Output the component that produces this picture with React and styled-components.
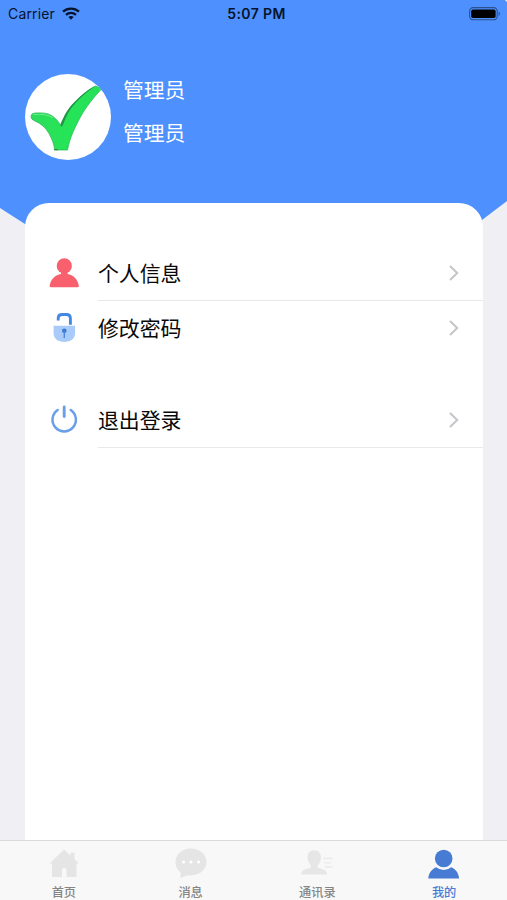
import React from 'react'
import styled, { createGlobalStyle } from 'styled-components';

const GlobalStyle = createGlobalStyle`
    * {
        box-sizing: border-box;
    }
    body {
        margin: 0;
        background: #efeff4;
        font-family: Inter, "Noto Sans CJK SC", sans-serif;
    }
`;

const WifiIcon = () => (
    <svg width="18" height="13" viewBox="0 0 18 13" fill="none" stroke="#07132b" strokeWidth="2.3">
        <path d="M1 4.7C5.5.5 12.5.5 17 4.7" />
        <path d="M4 7.9C6.8 5.3 11.2 5.3 14 7.9" />
        <path d="M6.4 10.1C7.9 8.7 10.1 8.7 11.6 10.1L9 12.8Z" fill="#07132b" stroke="none" />
    </svg>
);

const BatteryIcon = () => (
    <svg width="32" height="14" viewBox="0 0 32 14">
        <rect x=".6" y=".6" width="27.6" height="12.2" rx="3.6" fill="none" stroke="#2b518e" strokeWidth="1.1" />
        <rect x="2.2" y="2.4" width="24.4" height="8.6" rx="1.8" fill="#000" />
        <path d="M29.6 4.8c1.8.7 1.8 3.500 0 4.200z" fill="#2b518e" />
    </svg>
);

const CheckIcon = () => (
    <svg width="86" height="86" viewBox="0 0 86 86">
        <defs>
            <linearGradient id="tick" x1="0" y1="0" x2="1" y2="0">
                <stop offset="0" stopColor="#2fdc5b" />
                <stop offset=".5" stopColor="#25e557" />
                <stop offset="1" stopColor="#27df5a" />
            </linearGradient>
        </defs>
        <path
            d="M6 42.500C6 40 8 39 11 39C19 38.500 24 39.500 28 42.500C32 45.500 34 49 36.500 52C40 42 44 34 50 28.500C56 22 63 15.500 70.500 12L77 14.500C69 23 61 33 56 42C50 53 45 63 42.500 76H29.500C29.500 71 27 65 24 59.500C20.500 53.500 16 49.500 10 47C7.500 46 6 44.500 6 42.500Z"
            fill="url(#tick)" stroke="#23b652" strokeWidth=".7"
        />
        <path d="M35.200 51C39 41 44 33 50 27.500C56 21.500 63 15.500 70.500 12C58 20.500 50 29 45 36C41 42 39 49 37 53Z" fill="#1e9747" />
        <path d="M8.500 40.500C17 40 23 40.500 28 44" fill="none" stroke="#72ed8d" />
        <path d="M29 75.700h4" stroke="#337b45" />
    </svg>
);

const PersonIcon = () => (
    <svg width="30" height="30" viewBox="0 0 30 30" fill="#f9606d">
        <circle cx="15.300" cy="7.900" r="7.600" />
        <path d="M.6 28C1.700 20.500 6.500 17.200 12 16L12.300 14h6l.3 2C24 17.200 28.800 20.500 29.900 28Q29.900 29.200 28.500 29.200H2Q.6 29.200.6 28Z" />
    </svg>
);

const LockIcon = () => (
    <svg width="30" height="32" viewBox="0 0 30 32" fill="none">
        <path d="M9.200 8.500V6.500Q9.200 2.500 13.200 2.500H17.400Q21.400 2.500 21.400 6.500V12.800" stroke="#4389e3" strokeWidth="2.900" />
        <path d="M4.600 13.700H26V21.300C26 26.800 21.300 30 15.300 30S4.600 26.800 4.600 21.300Z" fill="#a9cbfa" />
        <circle cx="15.300" cy="18.700" r="2.300" fill="#3979d0" />
        <path d="M15.300 19V26" stroke="#4a88dc" strokeWidth="1.400" />
    </svg>
);

const PowerIcon = () => (
    <svg width="28" height="30" viewBox="0 0 28 30" fill="none" stroke="#699fe8" strokeWidth="2.500" strokeLinecap="round">
        <path d="M7.700 5A11.700 11.700 0 1 0 20.700 5" />
        <path d="M14.200 2V11.500" strokeWidth="2.900" />
    </svg>
);

const Chevron = () => (
    <svg width="12" height="18" viewBox="0 0 12 18" fill="none" stroke="#c5c5ca" strokeWidth="2">
        <path d="M2 2L9.200 9L2 16" />
    </svg>
);

const HomeIcon = () => (
    <svg width="32" height="32" viewBox="0 0 32 32" fill="#e5e5e5">
        <path d="M16 1.500L22.500 7.500V4.500H26.500V11.200L31 15.500H28.500V29H18.500V21Q16.200 19 14 21V29H4V15.500H1.500Z" />
    </svg>
);

const ChatIcon = () => (
    <svg width="32" height="32" viewBox="0 0 32 32" fill="#e5e5e5">
        <path d="M16 .6C7.300.6.500 6.500.500 14C.500 18.500 2.500 22 5.700 24.500L5.500 30L12.500 27.200C23.500 28.500 31.500 22.500 31.500 14C31.500 6.500 24.500.6 16 .6Z" />
        <g fill="#fff">
            <circle cx="8.500" cy="14" r="1.600" />
            <circle cx="16" cy="14" r="1.600" />
            <circle cx="23.500" cy="14" r="1.600" />
        </g>
    </svg>
);

const ContactsIcon = () => (
    <svg width="34" height="32" viewBox="0 0 34 32" fill="#e6e6e6">
        <path d="M14 2.200C9.500 2.200 7.300 5.500 7.600 10C7.800 13.500 9.500 15.500 11 17.500V19.500C5 21.500 1.200 22 1.200 26.500H27.200C27 22 23 21.500 17.500 19.500V17.500C19.500 15.500 20.800 13.500 21 10C21.200 5.500 18.500 2.200 14 2.200Z" />
        <path d="M23 9.500H32.500V11.300H23ZM24 14H31V15.500H24ZM25 18H32.500V19.800H25Z" fill="#ececec" />
    </svg>
);

const MineIcon = () => (
    <svg width="32" height="32" viewBox="0 0 32 32" fill="#487cd4">
        <circle cx="15.700" cy="10.500" r="8.800" />
        <path d="M.3 30.500C.7 25 3.700 21 8.200 19.200Q15.700 25 23.200 19.200C27.700 21 30.700 25 31.100 30.500Z" />
    </svg>
);

const tabs = [
    { name: '首页', icon: <HomeIcon /> },
    { name: '消息', icon: <ChatIcon /> },
    { name: '通讯录', icon: <ContactsIcon /> },
    { name: '我的', icon: <MineIcon />, active: true },
];

const MenuRow = ({ icon, label, line, gap }) => (
    <Row $gap={gap}>
        <RowIcon>{icon}</RowIcon>
        <RowBody $line={line}>
            <Label>{label}</Label>
            <Chevron />
        </RowBody>
    </Row>
);

const App = () => {
    return (
        <Screen>
            <GlobalStyle />
            <Hero>
                <StatusBar>
                    <Carrier>Carrier <WifiIcon /></Carrier>
                    <Time>5:07 PM</Time>
                    <Battery><BatteryIcon /></Battery>
                </StatusBar>
                <Profile>
                    <Avatar><CheckIcon /></Avatar>
                    <Names>
                        <Name>管理员</Name>
                        <Name>管理员</Name>
                    </Names>
                </Profile>
            </Hero>
            <Sheet>
                <MenuRow icon={<PersonIcon />} label="个人信息" line />
                <MenuRow icon={<LockIcon />} label="修改密码" />
                <MenuRow icon={<PowerIcon />} label="退出登录" line gap />
            </Sheet>
            <TabBar>
                {tabs.map((tab) => (
                    <Tab key={tab.name} $active={tab.active}>
                        {tab.icon}
                        <span>{tab.name}</span>
                    </Tab>
                ))}
            </TabBar>
        </Screen>
    )
};

const Screen = styled.div`
    display: flex;
    flex-direction: column;
    width: 507px;
    height: 900px;
    overflow: hidden;
    background: #efeff4;
`;

const Hero = styled.header`
    flex: none;
    height: 240px;
    background: #4d90fe;
    clip-path: polygon(0 0, 505px 0, 507px 2px, 100% 201px, 482px 220px, 455px 240px, 50px 240px, 25px 224px, 0 208px);
`;

const StatusBar = styled.div`
    display: grid;
    grid-template-columns: 1fr auto 1fr;
    align-items: center;
    height: 27px;
    padding: 0 6px 0 8px;
    color: #07132b;
    font-size: 14px;
`;

const Carrier = styled.div`
    display: flex;
    align-items: center;
    gap: 7px;
    letter-spacing: 0.15px;
`;

const Time = styled.div`
    padding-left: 4px;
    font-weight: 600;
    letter-spacing: 0.4px;
`;

const Battery = styled.div`
    display: flex;
    justify-content: flex-end;
`;

const Profile = styled.div`
    display: flex;
    gap: 12px;
    padding: 47px 25px 0;
`;

const Avatar = styled.div`
    width: 86px;
    height: 86px;
    border-radius: 50%;
    background: #fff;
    overflow: hidden;
`;

const Names = styled.div`
    display: flex;
    flex-direction: column;
    gap: 13px;
    padding-top: 2px;
`;

const Name = styled.div`
    color: #fff;
    font-size: 20.8px;
    line-height: 30px;
`;

const Sheet = styled.main`
    flex: 1;
    z-index: 1;
    margin: -37px 24.4px 0 25.4px;
    padding-top: 43px;
    border-radius: 24px 24px 0 0;
    background: #fff;
`;

const Row = styled.div`
    display: flex;
    height: 55px;
    margin-top: ${(props) => (props.$gap ? '37px' : '0')};
`;

const RowIcon = styled.div`
    display: flex;
    align-items: center;
    justify-content: center;
    width: 72.5px;
    padding: 0 0 2px 5px;
`;

const RowBody = styled.div`
    flex: 1;
    display: flex;
    align-items: center;
    justify-content: space-between;
    padding-right: 23px;
    border-bottom: ${(props) => (props.$line ? '1px solid #e8e8ea' : '1px solid transparent')};
`;

const Label = styled.span`
    padding-bottom: 2px;
    color: #080808;
    font-size: 20.9px;
`;

const TabBar = styled.nav`
    display: grid;
    grid-template-columns: repeat(4, 1fr);
    height: 60px;
    border-top: 1px solid #dadadc;
    background: #f8f8f8;
`;

const Tab = styled.div`
    display: flex;
    flex-direction: column;
    align-items: center;
    padding: 7px 0 0 1px;
    color: ${(props) => (props.$active ? '#487cd4' : '#858585')};
    font-size: 12.2px;
    font-weight: 500;

    span {
        margin-top: 4px;
        line-height: 18px;
    }
`;

export default App
